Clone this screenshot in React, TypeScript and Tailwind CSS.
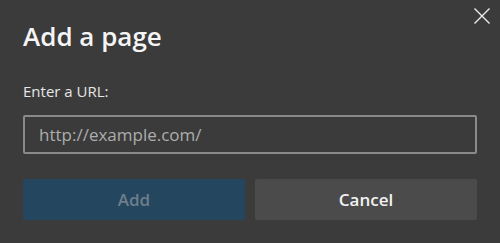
export default function App() {
  return (
    <div
      className="relative h-[243px] w-[500px] overflow-hidden bg-[#3b3b3b] px-[23px] pt-[20px] text-white"
      style={{ fontFamily: '"Open Sans", "Noto Sans", sans-serif' }}
    >
      {/* close */}
      <button aria-label="Close" className="absolute left-[474px] top-[8px] text-[#ececec]">
        <svg width="16" height="16" viewBox="0 0 16 16" fill="none" stroke="currentColor" strokeWidth="1.4">
          <path d="M0.5 0.5L15.5 15.5M15.5 0.5L0.5 15.5" />
        </svg>
      </button>

      <h1 className="text-[26px] font-semibold leading-[32px] text-[#f5f5f5]">Add a page</h1>

      <label className="mt-[29px] block text-[15px] leading-[20px] text-[#e6e6e6]">Enter a URL:</label>

      <div className="mt-[14px] flex h-[39px] w-[454px] items-center rounded-[2px] border-2 border-[#8a8a8a] px-[14px]">
        <span className="text-[17px] text-[#adadad]">http://example.com/</span>
      </div>

      <div className="mt-[25px] flex gap-[10px]">
        <button className="h-[41px] w-[222px] rounded-[2px] bg-[#25465f] text-[17px] font-semibold text-[#6d7e8b]">
          Add
        </button>
        <button className="h-[41px] w-[222px] rounded-[2px] bg-[#4b4b4b] text-[17px] font-semibold text-[#f2f2f2]">
          Cancel
        </button>
      </div>
    </div>
  );
}
